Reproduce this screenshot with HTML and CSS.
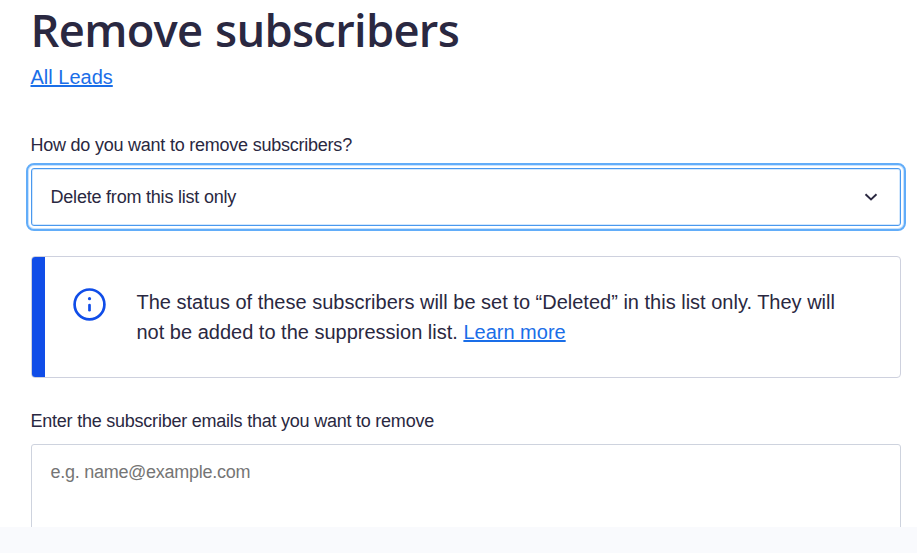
FILE: index.html
```html
<!DOCTYPE html>
<html lang="en">
<head>
<meta charset="utf-8">
<title>Remove subscribers</title>
<link rel="stylesheet" href="styles.css">
</head>
<body>
<main class="page">
  <h1 class="title">Remove subscribers</h1>
  <a class="link list-link" href="#">All Leads</a>
  <div class="label method-label">How do you want to remove subscribers?</div>
  <div class="select" tabindex="0">
    <span>Delete from this list only</span>
    <svg class="chevron" viewBox="0 0 14 10"><path d="M1.5 2.2 7 7.5 12.5 2.2"/></svg>
  </div>
  <section class="notice">
    <svg class="info" viewBox="0 0 35 35"><circle cx="17.5" cy="17.4" r="14.9"/><path d="M17.5 18v5.2"/><circle class="dot" cx="17.5" cy="11.7" r="1.6"/></svg>
    <p class="notice-text">The status of these subscribers will be set to “Deleted” in this list only. They will<br>not be added to the suppression list. <a class="link" href="#">Learn more</a></p>
  </section>
  <div class="label emails-label">Enter the subscriber emails that you want to remove</div>
  <div class="emails">e.g. name@example.com</div>
</main>
<footer class="footer"></footer>
</body>
</html>
```
FILE: styles.css
```css
* { box-sizing: border-box; }
body {
  margin: 0;
  height: 553px;
  overflow: hidden;
  background: #fff;
  color: #2a2841;
  font-family: "Liberation Sans", Arial, sans-serif;
}
.page { height: 527px; padding: 0 16px 0 31px; overflow: hidden; }
.title {
  margin: 0 0 0 -0.5px;
  height: 62px;
  font: 600 45.3px/60px "Open Sans", sans-serif;
  letter-spacing: -0.7px;
  word-spacing: 1.5px;
  white-space: nowrap;
}
.link { color: #1a6ee8; text-decoration: underline; text-decoration-thickness: 2px; text-underline-offset: 1px; }
.list-link { display: block; width: max-content; margin-left: -0.5px; font-size: 20px; line-height: 30px; }
.label { margin-left: -0.5px; font-size: 18px; line-height: 24px; letter-spacing: -0.23px; white-space: nowrap; }
.method-label { margin-top: 41px; }
.select {
  display: flex;
  align-items: center;
  justify-content: space-between;
  height: 58px;
  margin-top: 11px;
  padding: 0 22px 0 18.5px;
  border: 1px solid #4a98ee;
  border-radius: 3px;
  outline: 2px solid #62adf9;
  outline-offset: 3px;
  box-shadow: inset 0 0 0 1px #d3e8fd, 0 0 0 2px #fff, 0 0 0 3px #c8e2fd;
  font-size: 18px;
  letter-spacing: -0.21px;
}
.chevron { width: 14px; height: 10px; fill: none; stroke: #2a2841; stroke-width: 1.9; }
.notice {
  display: flex;
  height: 122px;
  margin-top: 30px;
  border: 1px solid #ced1de;
  border-radius: 4px;
  overflow: hidden;
}
.notice::before { content: ""; flex: 0 0 13px; background: #104de8; }
.info { flex: none; width: 35px; height: 35px; margin: 30px 29.5px 0 27px; fill: none; stroke: #104de8; stroke-width: 2.7; stroke-linecap: round; }
.info .dot { fill: #104de8; stroke: none; }
.notice-text { margin: 30px 0 0; font-size: 20px; line-height: 30px; white-space: nowrap; }
.emails-label { margin-top: 31px; }
.emails {
  height: 120px;
  margin-top: 11px;
  padding: 15px 18.5px;
  border: 1px solid #ced3de;
  border-radius: 3px;
  color: #757575;
  font-size: 18px;
  line-height: 24px;
  letter-spacing: -0.27px;
}
.footer { height: 26px; background: #f9fafd; }
```
